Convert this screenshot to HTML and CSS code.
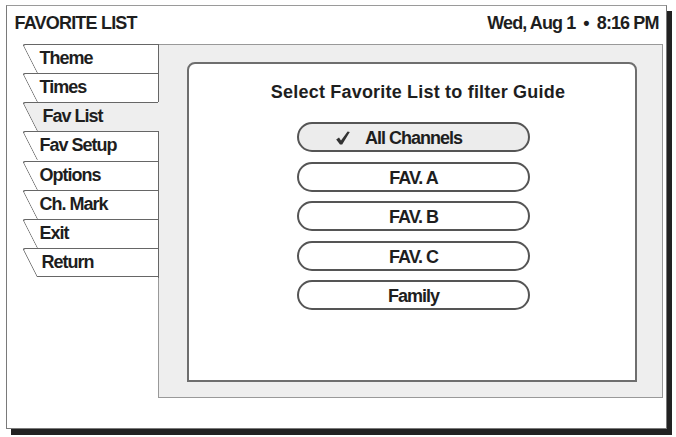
FILE: index.html
```html
<!DOCTYPE html>
<html>
<head>
<meta charset="utf-8">
<title>Favorite List</title>
<link rel="stylesheet" href="styles.css">
</head>
<body>
<div class="frame">
  <header class="header">
    <span class="screen-title">FAVORITE LIST</span>
    <span class="clock">Wed, Aug 1<span class="sep">•</span>8:16 PM</span>
  </header>
  <div class="content">
    <nav class="tabs">
      <div class="tab">Theme</div>
      <div class="tab">Times</div>
      <div class="tab active">Fav List</div>
      <div class="tab">Fav Setup</div>
      <div class="tab">Options</div>
      <div class="tab">Ch. Mark</div>
      <div class="tab">Exit</div>
      <div class="tab return">Return</div>
    </nav>
    <section class="panel">
      <div class="card">
        <h1 class="card-title">Select Favorite List to filter Guide</h1>
        <div class="options">
          <div class="option selected"><span class="label"><svg class="check" width="14" height="14" viewBox="0 0 14 14"><path d="M0.2 8.4 L3.0 6.6 L5.0 9.4 L11.6 0.4 L13.8 1.0 L6.2 13.6 L4.0 13.6 Z" fill="#333333"/></svg>All Channels</span></div>
          <div class="option"><span class="label">FAV. A</span></div>
          <div class="option"><span class="label">FAV. B</span></div>
          <div class="option"><span class="label">FAV. C</span></div>
          <div class="option"><span class="label">Family</span></div>
        </div>
      </div>
    </section>
  </div>
</div>
</body>
</html>
```
FILE: styles.css
```css
html, body {
  margin: 0;
  padding: 0;
  background: #ffffff;
}

body {
  min-height: 437px;
  font-family: "Liberation Sans", Arial, sans-serif;
  font-weight: bold;
  color: #1e1e1e;
}

.frame {
  box-sizing: border-box;
  width: 661px;
  height: 424px;
  margin: 5px 0 0 6px;
  border: 1.5px solid #7a7a7a;
  border-top-color: #9a9a9a;
  box-shadow: 5px 6px 0 #222222;
  background: #ffffff;
  display: flex;
  flex-direction: column;
}

.header {
  box-sizing: border-box;
  height: 37.5px;
  display: flex;
  justify-content: space-between;
  align-items: flex-start;
  padding: 6.5px 7.5px 0 7.5px;
  font-size: 18px;
  line-height: 20px;
  letter-spacing: -0.8px;
}

.clock {
  letter-spacing: -0.9px;
}

.sep {
  margin: 0 8px;
}

.content {
  display: flex;
  align-items: flex-start;
}

.tabs {
  width: 137.5px;
  margin-left: 14.5px;
  display: flex;
  flex-direction: column;
  position: relative;
  z-index: 1;
}

.tab {
  position: relative;
  isolation: isolate;
  overflow: hidden;
  box-sizing: border-box;
  height: 29.25px;
  display: flex;
  align-items: center;
  padding: 0 0 1px 18px;
  border-right: 1.5px solid #666666;
  font-size: 18px;
  line-height: 20px;
  letter-spacing: -1px;
}

.tab::before {
  content: "";
  position: absolute;
  z-index: -1;
  top: 0;
  bottom: 0;
  left: 0.5px;
  width: 200px;
  box-sizing: border-box;
  background: #ffffff;
  border-top: 1.5px solid #666666;
  border-left: 1.5px solid #666666;
  border-top-left-radius: 3px;
  transform: skewX(27deg);
  transform-origin: 0 0;
}

.tab:last-child::before {
  border-bottom: 1.5px solid #666666;
}

.tab.active {
  padding-left: 21px;
  border-right-color: #eeeeee;
}

.tab.active::before {
  background: #eeeeee;
}

.tab.return {
  padding-left: 20px;
}

.panel {
  box-sizing: border-box;
  width: 505px;
  height: 354px;
  margin-left: -1.5px;
  border: 1.5px solid #999999;
  background: #eeeeee;
  padding: 17.5px 0 0 28.5px;
}

.card {
  box-sizing: border-box;
  width: 450px;
  height: 320px;
  border: 2px solid #6e6e6e;
  border-radius: 8px 8px 0 0;
  background: #ffffff;
  display: flex;
  flex-direction: column;
  align-items: center;
  padding-top: 18px;
}

.card-title {
  margin: 0 0 20px 12px;
  font-size: 18px;
  line-height: 20px;
  font-weight: bold;
  letter-spacing: 0.2px;
}

.options {
  width: 233px;
  display: flex;
  flex-direction: column;
  gap: 9.5px;
  margin-left: 3px;
}

.option {
  box-sizing: border-box;
  height: 30px;
  border: 2px solid #555555;
  border-radius: 15px;
  background: #ffffff;
  display: flex;
  justify-content: center;
  align-items: center;
  font-size: 18px;
  line-height: 20px;
  letter-spacing: -1px;
  padding-top: 2px;
}

.option.selected {
  background: #ececec;
}

.label {
  position: relative;
}

.check {
  position: absolute;
  right: 100%;
  top: 3px;
  margin-right: 15px;
}
```
